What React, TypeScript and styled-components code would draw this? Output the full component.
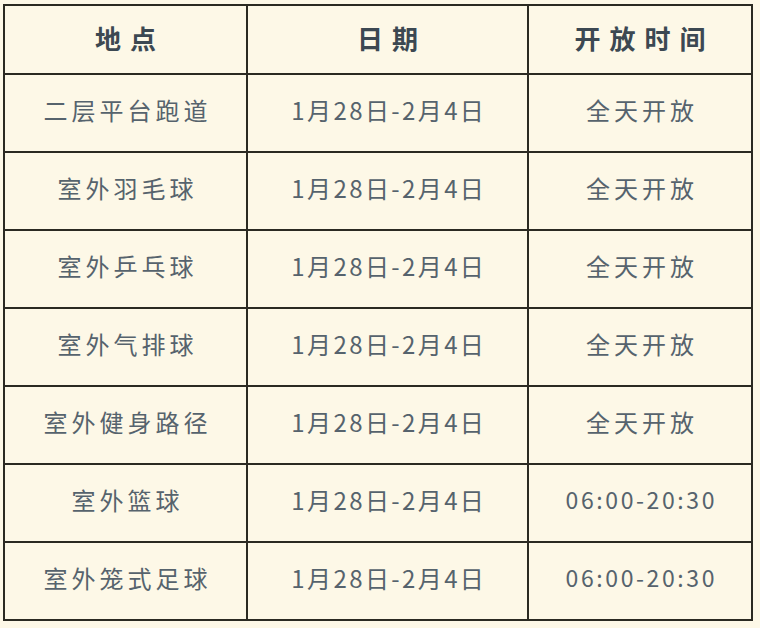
import React from "react";
import styled, { createGlobalStyle } from "styled-components";

const Global = createGlobalStyle`
  html, body { margin: 0; padding: 0; background: #fdf8e7; }
  body { font-family: "Noto Sans CJK SC", "Noto Sans", sans-serif; }
`;

const Page = styled.div`
  padding: 4px 0 0 3px;
`;

const Grid = styled.div`
  display: grid;
  grid-template-columns: 241px 279px 222px;
  grid-template-rows: 67px repeat(7, 76px);
  gap: 2px;
  padding: 2px;
  width: max-content;
  background: #2b2a22;
`;

const Cell = styled.div<{ $head?: boolean; $mono?: boolean }>`
  background: #fdf8e7;
  display: flex;
  align-items: center;
  justify-content: center;
  padding-bottom: ${(p) => (p.$head ? "4px" : "7px")};
  line-height: 1;
  color: ${(p) => (p.$head ? "#3c4852" : "#56636d")};
  font-size: ${(p) => (p.$head ? "26px" : p.$mono ? "23px" : "24px")};
  font-weight: ${(p) => (p.$head ? 700 : 400)};
  letter-spacing: ${(p) => (p.$head ? "9px" : p.$mono ? "2.6px" : "4px")};
  text-indent: ${(p) => (p.$head ? "9px" : p.$mono ? "2.6px" : "4px")};
  white-space: nowrap;
`;

const DateText = styled.span`
  font-size: 24px;
  letter-spacing: 2.4px;
`;

const rows: [string, string][] = [
  ["二层平台跑道", "全天开放"],
  ["室外羽毛球", "全天开放"],
  ["室外乒乓球", "全天开放"],
  ["室外气排球", "全天开放"],
  ["室外健身路径", "全天开放"],
  ["室外篮球", "06:00-20:30"],
  ["室外笼式足球", "06:00-20:30"],
];

export default function App() {
  return (
    <>
      <Global />
      <Page>
        <Grid>
          <Cell $head>地点</Cell>
          <Cell $head>日期</Cell>
          <Cell $head>开放时间</Cell>
          {rows.map(([place, time], i) => (
            <React.Fragment key={i}>
              <Cell>{place}</Cell>
              <Cell $mono>
                <DateText>1月28日-2月4日</DateText>
              </Cell>
              <Cell $mono={time.startsWith("0")}>{time}</Cell>
            </React.Fragment>
          ))}
        </Grid>
      </Page>
    </>
  );
}
